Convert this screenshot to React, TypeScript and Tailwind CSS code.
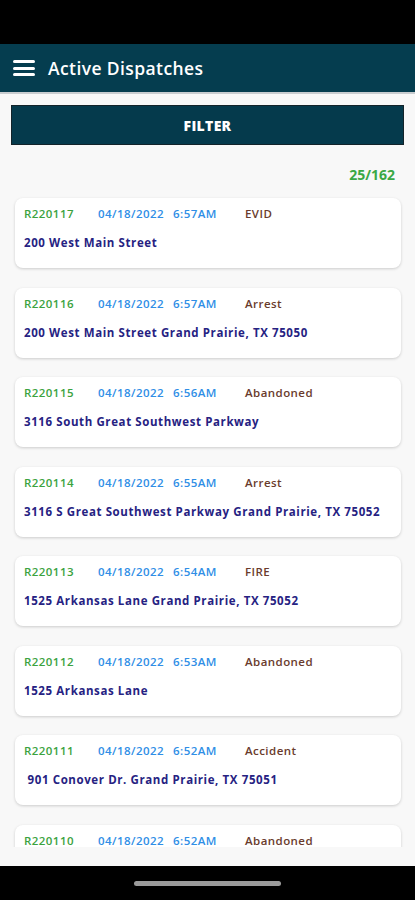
import React from "react";

const items = [
  { id: "R220117", date: "04/18/2022", time: "6:57AM", type: "EVID", addr: "200 West Main Street" },
  { id: "R220116", date: "04/18/2022", time: "6:57AM", type: "Arrest", addr: "200 West Main Street Grand Prairie, TX 75050" },
  { id: "R220115", date: "04/18/2022", time: "6:56AM", type: "Abandoned", addr: "3116 South Great Southwest Parkway" },
  { id: "R220114", date: "04/18/2022", time: "6:55AM", type: "Arrest", addr: "3116 S Great Southwest Parkway Grand Prairie, TX 75052" },
  { id: "R220113", date: "04/18/2022", time: "6:54AM", type: "FIRE", addr: "1525 Arkansas Lane Grand Prairie, TX 75052" },
  { id: "R220112", date: "04/18/2022", time: "6:53AM", type: "Abandoned", addr: "1525 Arkansas Lane" },
  { id: "R220111", date: "04/18/2022", time: "6:52AM", type: "Accident", addr: " 901 Conover Dr. Grand Prairie, TX 75051" },
  { id: "R220110", date: "04/18/2022", time: "6:52AM", type: "Abandoned", addr: "" },
];

export default function App() {
  return (
    <div
      className="w-[415px] h-[900px] flex flex-col bg-black overflow-hidden"
      style={{ fontFamily: '"Open Sans", "Liberation Sans", sans-serif' }}
    >
      <div className="h-[44px] bg-black shrink-0" />
      <div className="h-[48px] bg-[#053d4f] shrink-0 flex items-center pl-[13px]">
        <div className="flex flex-col gap-[3.5px] w-[22px]">
          <div className="h-[3px] bg-white rounded-sm" />
          <div className="h-[3px] bg-white rounded-sm" />
          <div className="h-[3px] bg-white rounded-sm" />
        </div>
        <span className="ml-[13px] text-white text-[17.5px] font-semibold tracking-[0.4px]">Active Dispatches</span>
      </div>
      <div className="h-[2px] bg-[#c9cdd0] shrink-0" />
      <div className="h-[772px] bg-[#f8f8f8] shrink-0 flex flex-col">
        <div className="h-[753px] shrink-0 overflow-hidden flex flex-col">
          <div className="px-[11px] pt-[11px] shrink-0">
            <div className="h-[40px] bg-[#053a4c] border border-[#13232a] flex items-center justify-center">
              <span className="text-white text-[14px] font-extrabold tracking-[0.3px]">FILTER</span>
            </div>
          </div>
          <div className="h-[53px] shrink-0 flex items-center justify-end pr-[20px] pt-[5px]">
            <span className="text-[#3aa845] text-[14px] font-bold">25/162</span>
          </div>
          <div className="flex flex-col gap-[19.5px] px-[15px] pr-[14px] shrink-0">
            {items.map((it) => (
              <div
                key={it.id}
                className="h-[70px] shrink-0 bg-white rounded-[8px] shadow-[0_1px_3px_rgba(0,0,0,0.18)] pl-[9px] pt-[8px]"
              >
                <div className="flex items-center h-[16px] text-[11.5px] font-semibold tracking-[0.45px] whitespace-nowrap">
                  <span className="w-[74px] text-[#3ba23e]">{it.id}</span>
                  <span className="w-[75px] text-[#2f8ee6]">{it.date}</span>
                  <span className="w-[72px] text-[#2f8ee6]">{it.time}</span>
                  <span className="text-[#6a3b2c]">{it.type}</span>
                </div>
                {it.addr && (
                  <div className="mt-[13px] h-[16px] flex items-center text-[11.5px] font-bold tracking-[0.6px] text-[#262282] whitespace-pre">
                    {it.addr}
                  </div>
                )}
              </div>
            ))}
          </div>
        </div>
      </div>
      <div className="flex-1 bg-black flex items-center justify-center">
        <div className="w-[147px] h-[5px] rounded-full bg-[#9a9a9a]" />
      </div>
    </div>
  );
}
